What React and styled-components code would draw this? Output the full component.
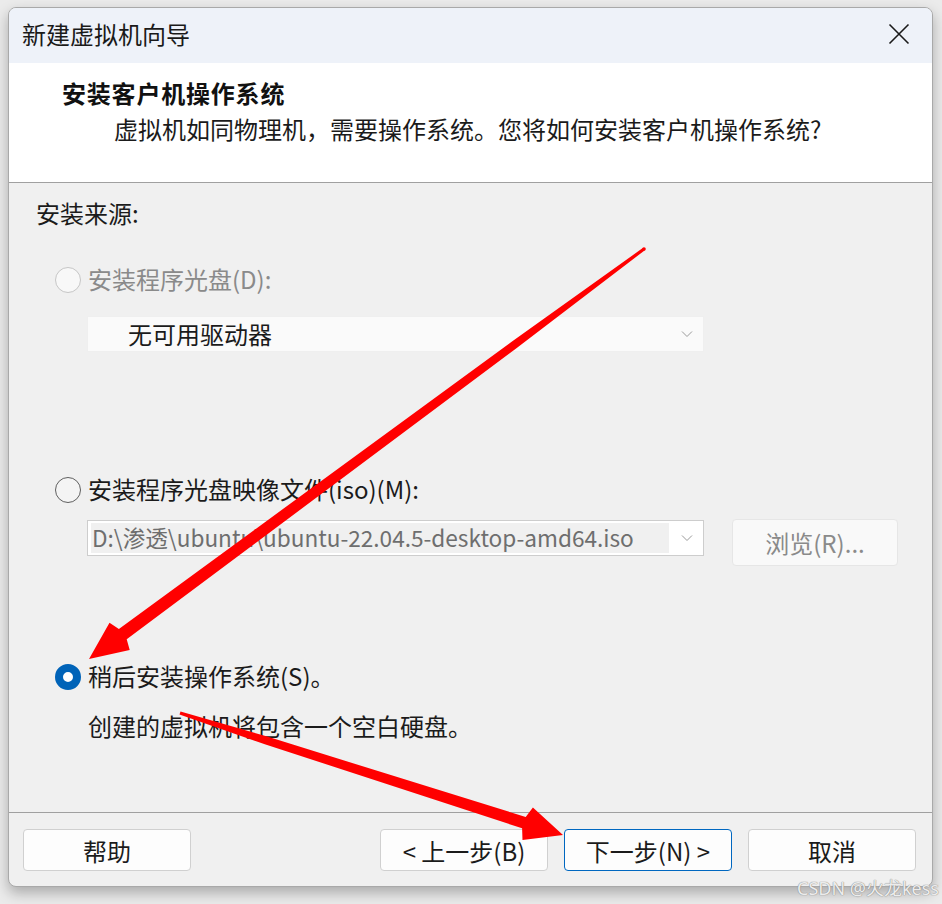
import React from "react";
import styled, { createGlobalStyle } from "styled-components";

const Global = createGlobalStyle`
  html, body { margin: 0; padding: 0; background: #ebebeb; }
  body { font-family: "Noto Sans CJK SC", "Noto Sans", sans-serif; }
  * { box-sizing: border-box; }
`;

const Page = styled.div`
  position: relative;
  width: 942px;
  height: 904px;
  padding: 7px 0 0 8px;
  overflow: hidden;
`;

const Window = styled.div`
  width: 925px;
  border: 1px solid #a9a9a9;
  border-radius: 8px;
  overflow: hidden;
  background: #f0f0f0;
  box-shadow: 0 6px 14px rgba(0, 0, 0, 0.28);
  color: #1b1b1b;
`;

const TitleBar = styled.div`
  height: 55px;
  background: #eef2f9;
  display: flex;
  align-items: center;
  justify-content: space-between;
  padding: 0 22px 4px 13px;
`;

const Title = styled.div`
  font-size: 24px;
  line-height: 32px;
  color: #1a1a1a;
`;

const CloseBtn = styled.svg`
  width: 22px;
  height: 22px;
  display: block;
`;

const Header = styled.div`
  height: 120px;
  background: #ffffff;
  border-bottom: 1px solid #a0a0a0;
  padding: 14px 0 0 53px;
`;

const Heading = styled.div`
  font-size: 24px;
  line-height: 32px;
  font-weight: 700;
  letter-spacing: 0.8px;
  color: #111;
`;

const SubHeading = styled.div`
  margin-top: 4px;
  padding-left: 52px;
  font-size: 24px;
  line-height: 32px;
  color: #1b1b1b;
`;

const Body = styled.div`
  height: 630px;
  border-bottom: 1px solid #a0a0a0;
  padding: 14px 0 0 27px;
`;

const Line = styled.div`
  font-size: 24px;
  line-height: 32px;
  margin-top: ${(p) => p.$mt || 0}px;
  padding-left: ${(p) => p.$pl || 0}px;
  color: ${(p) => (p.$muted ? "#8a8a8a" : "#1b1b1b")};
`;

const RadioRow = styled.label`
  display: flex;
  align-items: center;
  gap: 7px;
  margin-top: ${(p) => p.$mt}px;
  margin-left: 19px;
  font-size: 24px;
  line-height: 32px;
  color: ${(p) => (p.$disabled ? "#8a8a8a" : "#1b1b1b")};
`;

const Radio = styled.span`
  width: 26px;
  height: 26px;
  border-radius: 50%;
  flex: none;
  margin-top: 2px;
  ${(p) =>
    p.$checked
      ? `border: 8px solid #0063b8; background: #fff;`
      : p.$disabled
      ? `border: 1.5px solid #c6c6c6; background: #f8f8f8;`
      : `border: 1.5px solid #5f5f5f; background: #f4f4f4;`}
`;

const Select = styled.div`
  width: 617px;
  height: 36px;
  margin-top: ${(p) => p.$mt || 0}px;
  display: flex;
  align-items: center;
  justify-content: space-between;
  padding: 0 10px 0 3px;
  background: ${(p) => (p.$bordered ? "#ffffff" : "#fafafa")};
  border: 1px solid ${(p) => (p.$bordered ? "#cdcdcd" : "#efefef")};
`;

const SelectText = styled.div`
  line-height: 34px;
  font-size: ${(p) => (p.$gray ? "22.6px" : "24px")};
  padding-left: ${(p) => p.$pl || 0}px;
  color: ${(p) => (p.$gray ? "#6e6e6e" : "#1b1b1b")};
  background: ${(p) =>
    p.$hl ? "linear-gradient(#f0f0f0, #f0f0f0) 0 2px / 100% 30px no-repeat" : "transparent"};
  width: ${(p) => (p.$hl ? "578px" : "auto")};
  white-space: nowrap;
`;

const Chevron = () => (
  <svg width="12" height="8" viewBox="0 0 12 8">
    <path d="M1 1.5 L6 6.5 L11 1.5" fill="none" stroke="#9a9a9a" strokeWidth="1" />
  </svg>
);

const IndentBlock = styled.div`
  margin-left: 51px;
`;

const FileRow = styled.div`
  display: flex;
  align-items: flex-start;
  gap: 28px;
  margin-top: 14px;
  & > ${Select} {
    margin-top: 1px;
  }
`;

const BrowseButton = styled.div`
  width: 166px;
  height: 47px;
  border: 1px solid #e6e6e6;
  border-radius: 4px;
  background: #f9f9f9;
  display: flex;
  align-items: center;
  justify-content: center;
  font-size: 24px;
  color: #8a8a8a;
`;

const Footer = styled.div`
  height: 73px;
  display: flex;
  align-items: flex-start;
  padding: 16px 16px 0 14px;
`;

const Button = styled.div`
  width: 168px;
  height: 42px;
  border: 1px solid ${(p) => (p.$primary ? "#0067c0" : "#d0d0d0")};
  border-radius: 4px;
  background: #fdfdfd;
  display: flex;
  align-items: center;
  justify-content: center;
  font-size: 24px;
  color: #1b1b1b;
  margin-left: ${(p) => p.$ml || 0}px;
`;

const Overlay = styled.svg`
  position: absolute;
  left: 0;
  top: 0;
  width: 942px;
  height: 904px;
  pointer-events: none;
`;

const Watermark = styled.div`
  position: absolute;
  right: 3px;
  bottom: 5px;
  font-size: 18px;
  line-height: 22px;
  color: rgba(250, 250, 250, 0.9);
  text-shadow: 0 0 1px #8a8a8a, 0 0 1px #8a8a8a;
  font-family: "Noto Sans", "Noto Sans CJK SC", sans-serif;
`;

export default function App() {
  return (
    <>
      <Global />
      <Page>
        <Window>
          <TitleBar>
            <Title>新建虚拟机向导</Title>
            <CloseBtn viewBox="0 0 22 22">
              <path d="M1.5 1.5 L20.5 20.5 M20.5 1.5 L1.5 20.5" stroke="#1a1a1a" strokeWidth="1.6" />
            </CloseBtn>
          </TitleBar>
          <Header>
            <Heading>安装客户机操作系统</Heading>
            <SubHeading>虚拟机如同物理机，需要操作系统。您将如何安装客户机操作系统?</SubHeading>
          </Header>
          <Body>
            <Line>安装来源:</Line>
            <RadioRow $mt={34} $disabled>
              <Radio $disabled />
              安装程序光盘(D):
            </RadioRow>
            <IndentBlock>
              <Select $mt={21}>
                <SelectText $pl={37}>无可用驱动器</SelectText>
                <Chevron />
              </Select>
            </IndentBlock>
            <RadioRow $mt={121}>
              <Radio />
              安装程序光盘映像文件(iso)(M):
            </RadioRow>
            <IndentBlock>
              <FileRow>
                <Select $bordered>
                  <SelectText $hl $gray $pl={1}>D:\渗透\ubuntu\ubuntu-22.04.5-desktop-amd64.iso</SelectText>
                  <Chevron />
                </Select>
                <BrowseButton>浏览(R)...</BrowseButton>
              </FileRow>
            </IndentBlock>
            <RadioRow $mt={94}>
              <Radio $checked />
              稍后安装操作系统(S)。
            </RadioRow>
            <Line $mt={18} $pl={52}>创建的虚拟机将包含一个空白硬盘。</Line>
          </Body>
          <Footer>
            <Button>帮助</Button>
            <Button $ml={189}>&lt; 上一步(B)</Button>
            <Button $ml={16} $primary>下一步(N) &gt;</Button>
            <Button $ml={16}>取消</Button>
          </Footer>
        </Window>
        <Overlay viewBox="0 0 942 904">
          <polygon
            fill="#ff0000"
            points="643.1,247.8 511.3,342.1 118.9,628.9 109.5,622.7 89,659 129.7,650.1 126.7,639.3 516.1,348.5 644.9,250.2"
          />
          <circle cx="644" cy="249" r="1.8" fill="#ff0000" />
          <polygon
            fill="#ff0000"
            points="180.5,711.6 267.2,736.6 525.7,816.9 532.9,807.6 563,835 522.5,840 522.1,828.3 264.8,744.2 179.5,714.4"
          />
        </Overlay>
        <Watermark>CSDN @火龙kess</Watermark>
      </Page>
    </>
  );
}
